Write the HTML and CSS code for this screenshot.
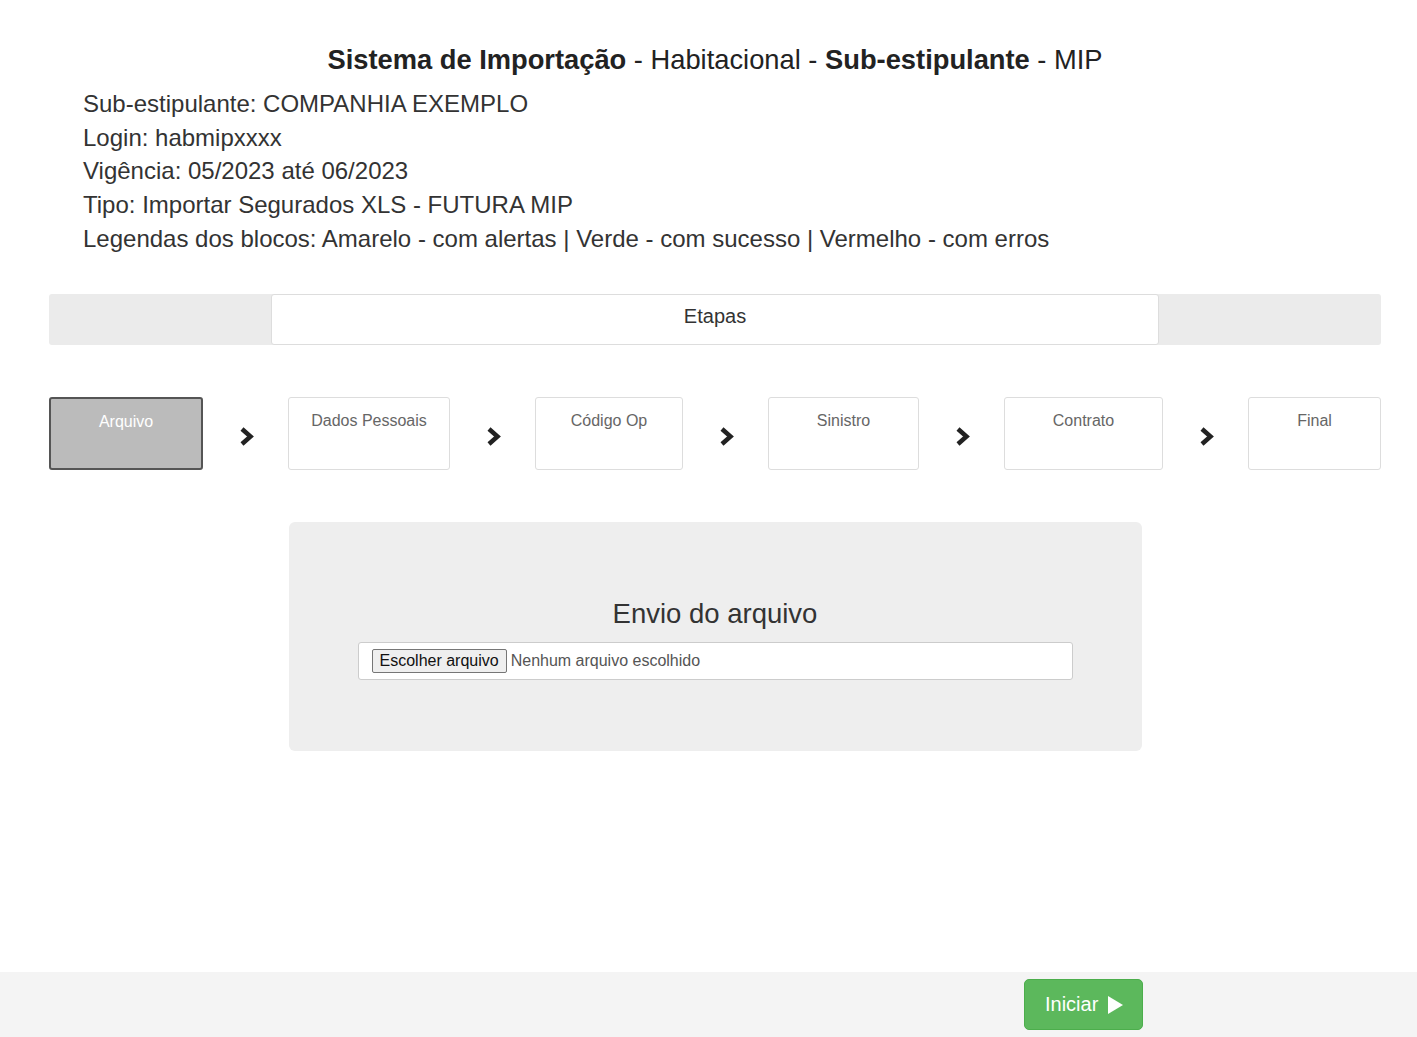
FILE: index.html
```html
<!doctype html>
<html lang="pt-BR">
  <head>
    <meta charset="utf-8" />
    <meta name="viewport" content="width=device-width" />
    <title>Sistema de Importação - Habitacional</title>
    <link rel="stylesheet" href="styles.css">
  </head>
  <body>
    <main class="page">
      <h1 class="title">
        <strong>Sistema de Importação</strong> - Habitacional - <strong>Sub-estipulante</strong> - MIP
      </h1>
      <ul class="info">
        <li>Sub-estipulante: COMPANHIA EXEMPLO</li>
        <li>Login: habmipxxxx</li>
        <li>Vigência: 05/2023 até 06/2023</li>
        <li>Tipo: Importar Segurados XLS - FUTURA MIP</li>
        <li>Legendas dos blocos: Amarelo - com alertas | Verde - com sucesso | Vermelho - com erros</li>
      </ul>

      <div class="stages-bar">
        <span></span>
        <div class="stages-title">Etapas</div>
        <span></span>
      </div>

      <ol class="steps">
        <li class="step step--active">Arquivo</li>
        <li class="arrow"><svg width="16" height="19" viewBox="0 0 16 19"><path d="M3 2 L11.5 9.5 L3 17" fill="none" stroke="#222" stroke-width="4.5"/></svg></li>
        <li class="step">Dados Pessoais</li>
        <li class="arrow"><svg width="16" height="19" viewBox="0 0 16 19"><path d="M3 2 L11.5 9.5 L3 17" fill="none" stroke="#222" stroke-width="4.5"/></svg></li>
        <li class="step">Código Op</li>
        <li class="arrow"><svg width="16" height="19" viewBox="0 0 16 19"><path d="M3 2 L11.5 9.5 L3 17" fill="none" stroke="#222" stroke-width="4.5"/></svg></li>
        <li class="step">Sinistro</li>
        <li class="arrow"><svg width="16" height="19" viewBox="0 0 16 19"><path d="M3 2 L11.5 9.5 L3 17" fill="none" stroke="#222" stroke-width="4.5"/></svg></li>
        <li class="step">Contrato</li>
        <li class="arrow"><svg width="16" height="19" viewBox="0 0 16 19"><path d="M3 2 L11.5 9.5 L3 17" fill="none" stroke="#222" stroke-width="4.5"/></svg></li>
        <li class="step">Final</li>
      </ol>

      <section class="upload">
        <h2>Envio do arquivo</h2>
        <label class="file-field">
          <span class="file-button">Escolher arquivo</span>
          <span class="file-name">Nenhum arquivo escolhido</span>
        </label>
      </section>
    </main>

    <footer class="footer">
      <div class="footer-inner">
        <button class="btn-start" type="button">
          Iniciar
          <svg width="16" height="18" viewBox="0 0 16 18"><path d="M1 0 L16 9 L1 18 Z" fill="#fff"/></svg>
        </button>
      </div>
    </footer>
  </body>
</html>
```

FILE: styles.css
```css
*, *::before, *::after {
  box-sizing: border-box;
}

html, body {
  margin: 0;
  padding: 0;
}

body {
  min-height: 100vh;
  display: flex;
  flex-direction: column;
  font-family: "Liberation Sans", Arial, sans-serif;
  color: #333;
  background: #fff;
}

.page {
  width: 1332px;
  margin-left: 49px;
  padding-top: 44px;
}

.title {
  margin: 0;
  text-align: center;
  font-size: 27.3px;
  line-height: 32px;
  font-weight: normal;
  color: #222;
}

.info {
  list-style: none;
  margin: 11px 0 0;
  padding: 0 0 0 34px;
  font-size: 24px;
  line-height: 33.7px;
  color: #333;
}

.stages-bar {
  display: grid;
  grid-template-columns: 222px 1fr 222px;
  height: 51px;
  margin-top: 38px;
  background: #ebebeb;
  border-radius: 3px;
}

.stages-title {
  display: flex;
  align-items: center;
  justify-content: center;
  background: #fff;
  border: 1px solid #ddd;
  border-radius: 3px;
  font-size: 20px;
  color: #333;
  padding-bottom: 5px;
}

.steps {
  list-style: none;
  display: grid;
  grid-template-columns: 154px 85px 162px 85px 148px 85px 151px 85px 159px 85px 133px;
  height: 73px;
  margin: 52px 0 0;
  padding: 0;
}

.step {
  border: 1px solid #ddd;
  border-radius: 3px;
  background: #fff;
  text-align: center;
  font-size: 16px;
  color: #666;
  padding-top: 14px;
}

.step--active {
  background: #bbb;
  border: 2px solid #555;
  color: #fff;
  padding-top: 14px;
}

.arrow {
  display: flex;
  align-items: center;
  justify-content: center;
  padding-top: 6px;
  padding-left: 3px;
}

.upload {
  width: 853px;
  margin: 52px auto 0;
  padding: 76px 69px 71px;
  background: #eee;
  border-radius: 6px;
  text-align: center;
}

.upload h2 {
  margin: 0 0 12px;
  font-size: 27.5px;
  line-height: 32px;
  font-weight: normal;
  color: #333;
}

.file-field {
  display: flex;
  align-items: center;
  gap: 4px;
  height: 38px;
  padding: 0 13px;
  background: #fff;
  border: 1px solid #ccc;
  border-radius: 3px;
  font-size: 16px;
}

.file-button {
  padding: 2px 7px;
  background: #efefef;
  border: 1px solid #767676;
  border-radius: 2px;
  color: #111;
}

.file-name {
  color: #555;
}

.footer {
  margin-top: auto;
  height: 65px;
  background: #f4f4f4;
}

.footer-inner {
  width: 855px;
  margin: 0 auto;
  padding-top: 7px;
  padding-right: 0;
  display: flex;
  justify-content: flex-end;
  transform: none;
}

.btn-start {
  display: flex;
  align-items: center;
  gap: 9px;
  width: 119px;
  height: 51px;
  margin-right: -7px;
  padding: 0 0 0 20px;
  background: #5cb85c;
  border: 1px solid #4cae4c;
  border-radius: 5px;
  color: #fff;
  font-family: "Liberation Sans", Arial, sans-serif;
  font-size: 20px;
}
```
